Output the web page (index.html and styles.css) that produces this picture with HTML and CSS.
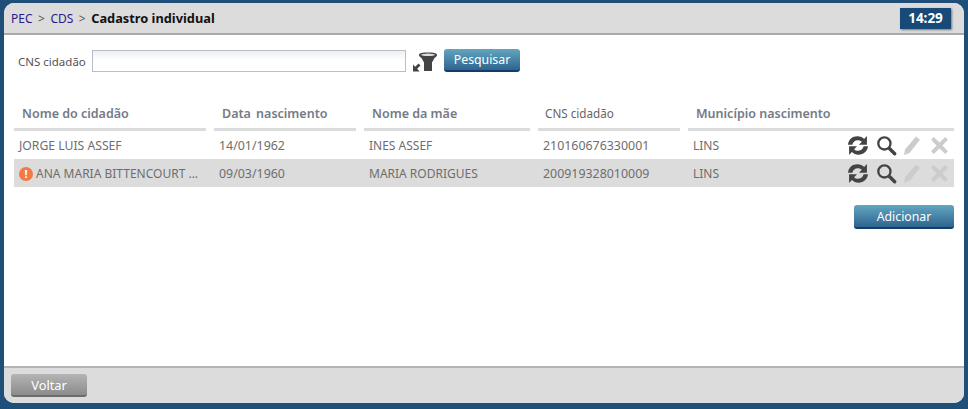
FILE: index.html

```html
<!DOCTYPE html>
<html lang="pt-BR">
<head>
  <meta charset="UTF-8">
  <title>Cadastro individual</title>
  <link rel="stylesheet" href="styles.css">
</head>
<body>
  <div class="janela">
    <!-- Topo -->
    <div class="topo">
      <div class="trilha">
        <a href="#">PEC</a><span class="sep">&gt;</span><a href="#">CDS</a><span class="sep">&gt;</span><b>Cadastro individual</b>
      </div>
      <div class="relogio">14:29</div>
    </div>

    <div class="conteudo">
      <!-- Busca -->
      <div class="busca">
        <label for="cns">CNS cidadão</label>
        <input type="text" id="cns">
        <svg class="filtro" width="24" height="20" viewBox="0 0 24 20">
          <path d="M6 3C6 1 10 .5 15 .5S24 1 24 3c0 1-1 2-2.500 3L19 10.500V19H11V10.500L8.500 6C7 5 6 4 6 3z" fill="#444"/>
          <ellipse cx="15" cy="2.800" rx="7" ry="1.200" fill="#ddd"/>
          <path d="M0 19.500V12.500l2.200 2.200 3.300-3.200 2 2-3.300 3.300 2.300 2.700z" fill="#444"/>
        </svg>
        <button class="botao azul pesquisar">Pesquisar</button>
      </div>

      <!-- Tabela -->
      <div class="tabela">
        <div class="linha cabecalho">
          <div class="col c1">Nome do cidadão</div>
          <div class="col c2">Data nascimento</div>
          <div class="col c3">Nome da mãe</div>
          <div class="col c4 claro">CNS cidadão</div>
          <div class="col c5">Município nascimento</div>
        </div>

        <div class="linha registro">
          <div class="col c1 nome">JORGE LUIS ASSEF</div>
          <div class="col c2 num">14/01/1962</div>
          <div class="col c3">INES ASSEF</div>
          <div class="col c4 num">210160676330001</div>
          <div class="col c5">
            <span>LINS</span>
            <span class="acoes">
              <svg class="i-sync" viewBox="0 0 22 20"><use href="#i-sync"/></svg>
              <svg class="i-lupa" viewBox="0 0 20 20"><use href="#i-lupa"/></svg>
              <svg class="i-lapis" viewBox="0 0 18 20"><use href="#i-lapis"/></svg>
              <svg class="i-x" viewBox="0 0 18 20"><use href="#i-x"/></svg>
            </span>
          </div>
        </div>

        <div class="linha registro par">
          <div class="col c1"><span class="alerta">!</span>ANA MARIA BITTENCOURT ...</div>
          <div class="col c2 num">09/03/1960</div>
          <div class="col c3">MARIA RODRIGUES</div>
          <div class="col c4 num">200919328010009</div>
          <div class="col c5">
            <span>LINS</span>
            <span class="acoes">
              <svg class="i-sync" viewBox="0 0 22 20"><use href="#i-sync"/></svg>
              <svg class="i-lupa" viewBox="0 0 20 20"><use href="#i-lupa"/></svg>
              <svg class="i-lapis" viewBox="0 0 18 20"><use href="#i-lapis"/></svg>
              <svg class="i-x" viewBox="0 0 18 20"><use href="#i-x"/></svg>
            </span>
          </div>
        </div>
      </div>

      <div class="adicionar">
        <button class="botao azul">Adicionar</button>
      </div>
    </div>

    <!-- Rodape -->
    <div class="rodape">
      <button class="botao cinza">Voltar</button>
    </div>
  </div>

  <!-- Icones -->
  <svg class="defs" width="0" height="0">
    <symbol id="i-sync" viewBox="0 0 22 20">
      <path d="M1.500 9.200C2 4.500 5.500 1.300 10.500 1.300c2.700 0 4.800 1 6.300 2.500L19.500 1V9.200h-7.600l2.800-2.700C13.800 5.600 12.400 5 10.700 5 8.200 5 6.300 6.600 5.600 9.200z" fill="#444"/>
      <path d="M20.500 10.800c-.5 4.700-4 7.900-9 7.900-2.700 0-4.800-1-6.300-2.500L2.500 19V10.800h7.600l-2.800 2.700c.9.900 2.300 1.500 4 1.500 2.500 0 4.400-1.600 5.100-4.200z" fill="#444"/>
    </symbol>
    <symbol id="i-lupa" viewBox="0 0 20 20">
      <circle cx="8" cy="8" r="5.800" fill="none" stroke="#444" stroke-width="2.200"/>
      <path d="M12.800 12.800l5 5" stroke="#444" stroke-width="3.200" stroke-linecap="round"/>
    </symbol>
    <symbol id="i-lapis" viewBox="0 0 18 20">
      <path d="M13 1l4 3.300L6.500 17.500 1 19.500 2 14z" fill="#ccc"/>
    </symbol>
    <symbol id="i-x" viewBox="0 0 18 20">
      <path d="M3.500 2L9 7.200 14.500 2 17 4.500 11.800 10 17 15.500 14.500 18 9 12.800 3.500 18 1 15.500 6.200 10 1 4.500z" fill="#ccc"/>
    </symbol>
  </svg>
</body>
</html>
```

FILE: styles.css

```css
html, body {
  height: 100%;
}

body {
  margin: 0;
  background-color: #1f4e79;
  font-family: "Noto Sans", Tahoma, sans-serif;
  font-size: 12px;
  color: #666;
  box-sizing: border-box;
  padding: 3px 4px 6px 4px;
}

.janela {
  height: 100%;
  display: flex;
  flex-direction: column;
  background-color: #fff;
  border-radius: 10px;
  overflow: hidden;
}

.topo {
  flex: none;
  height: 30px;
  display: flex;
  align-items: center;
  justify-content: space-between;
  padding: 0 13px 0 7px;
  background-color: #dcdcdc;
  border-bottom: 2px solid #aaa;
}

.trilha {
  color: #555;
}

.trilha a {
  color: #2a1a8c;
  text-decoration: none;
}

.trilha .sep {
  margin: 0 5.500px;
}

.trilha b {
  color: #111;
  font-size: 12.800px;
}

.relogio {
  width: 51px;
  height: 21px;
  line-height: 21px;
  margin-top: 1px;
  text-align: center;
  color: #fff;
  font-size: 13.500px;
  font-weight: bold;
  background-color: #174a78;
  box-shadow: 1px 1px 2px #777;
}

.conteudo {
  flex: 1;
  padding: 0 10px;
}

.busca {
  display: flex;
  align-items: center;
  height: 24px;
  margin-top: 14px;
  padding-left: 4px;
}

.busca label {
  width: 74px;
  font-size: 11.500px;
  color: #555;
}

.busca input {
  width: 314px;
  height: 22px;
  box-sizing: border-box;
  border: 1px solid #b9bccb;
  background: linear-gradient(#eef0f0, #fff 50%);
  padding: 0 4px;
}

.filtro {
  margin-left: 7px;
  margin-right: 7px;
  margin-top: 1px;
}

.botao {
  border: none;
  border-radius: 3px;
  color: #fff;
  font-family: inherit;
  font-size: 12.300px;
  cursor: pointer;
  padding: 0;
}

.azul {
  background: linear-gradient(#62a6bf, #2f6490);
  border-bottom: 2px solid #123c6b;
}

.cinza {
  background: linear-gradient(#b4b4b4, #8c8c8c);
  border-bottom: 2px solid #6c6c6c;
}

.pesquisar {
  width: 76px;
  height: 23px;
  margin-top: -2px;
}

.tabela {
  margin-top: 29px;
}

.linha {
  display: flex;
}

.cabecalho {
  height: 29px;
  gap: 8px;
  font-size: 12.500px;
  font-weight: 600;
  color: #747a86;
}

.cabecalho .col {
  box-sizing: border-box;
  border-bottom: 3px solid #dcdcdc;
  padding-left: 8px;
  line-height: 24px;
}

.cabecalho .c2 {
  word-spacing: 2px;
}

.cabecalho .claro {
  color: #666;
  font-weight: normal;
  font-size: 11.700px;
  line-height: 22px;
  padding-left: 7px;
}

.c1 { width: 192px; }
.c2 { width: 142px; }
.c3 { width: 166px; }
.c4 { width: 142px; }
.c5 { width: 266px; }

.registro {
  height: 28px;
  gap: 8px;
  align-items: center;
  color: #6e6e6e;
}

.registro.par {
  background-color: #dcdcdc;
}

.registro .col {
  box-sizing: border-box;
  padding-left: 5px;
}

.registro .nome {
  font-size: 12.200px;
}

.registro .num {
  font-size: 12.400px;
}

.registro .c5 {
  display: flex;
  align-items: center;
  justify-content: space-between;
  padding-left: 5px;
}

.alerta {
  display: inline-block;
  width: 14px;
  height: 14px;
  line-height: 14px;
  margin-right: 3px;
  border-radius: 50%;
  background-color: #f47a44;
  color: #fff;
  font-size: 11px;
  font-weight: bold;
  text-align: center;
}

.acoes {
  display: flex;
  align-items: center;
  padding-right: 5px;
}

.acoes svg {
  height: 21px;
}

.i-sync {
  width: 24px;
}

.i-lupa {
  width: 21px;
  margin-left: 6px;
}

.i-lapis {
  width: 18px;
  margin-left: 6px;
}

.i-x {
  width: 19px;
  margin-left: 9px;
}

.adicionar {
  display: flex;
  justify-content: flex-end;
  margin-top: 18px;
}

.adicionar .botao {
  width: 100px;
  height: 24px;
}

.rodape {
  flex: none;
  height: 37px;
  box-sizing: border-box;
  padding: 6px 7px 0;
  background-color: #dcdcdc;
  border-top: 2px solid #b4b4b4;
}

.rodape .botao {
  width: 76px;
  height: 23px;
  font-size: 12.800px;
}

.defs {
  position: absolute;
}
```
